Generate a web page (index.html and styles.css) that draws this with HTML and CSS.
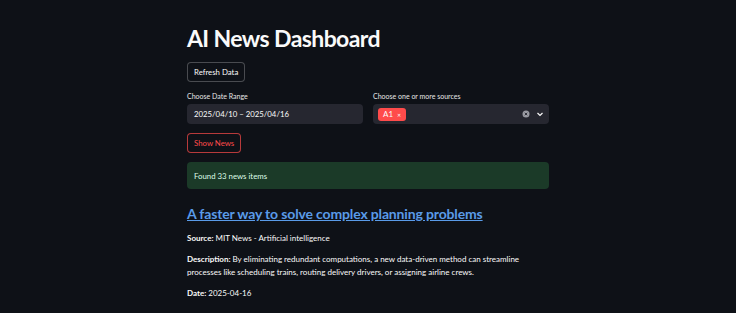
FILE: index.html
```html
<!DOCTYPE html>
<html lang="en">
<head>
  <meta charset="UTF-8" />
  <meta name="viewport" content="width=device-width, initial-scale=1.0"/>
  <title>AI News Dashboard</title>
  <link rel="stylesheet" href="styles.css">
</head>
<body>
  <main class="container">
    <h1 class="title">AI News Dashboard</h1>

    <button class="btn">Refresh Data</button>

    <div class="filters">
      <div class="field">
        <label class="field-label">Choose Date Range</label>
        <div class="input">2025/04/10 – 2025/04/16</div>
      </div>
      <div class="field">
        <label class="field-label">Choose one or more sources</label>
        <div class="input select">
          <span class="tag">A1 <span class="tag-x">&#x2715;</span></span>
          <span class="select-icons">
            <svg width="8" height="8" viewBox="0 0 16 16">
              <circle cx="8" cy="8" r="7" fill="#9a9ba3"/>
              <path d="M5.5 5.5l5 5M10.5 5.5l-5 5" stroke="#262730" stroke-width="1.8"/>
            </svg>
            <svg width="8" height="8" viewBox="0 0 16 16">
              <path d="M3 6l5 5 5-5" stroke="#fafafa" stroke-width="2.4" fill="none"/>
            </svg>
          </span>
        </div>
      </div>
    </div>

    <button class="btn btn-primary">Show News</button>

    <div class="alert">Found 33 news items</div>

    <article class="news">
      <h2><a href="#">A faster way to solve complex planning problems</a></h2>
      <p><strong>Source:</strong> MIT News - Artificial intelligence</p>
      <p><strong>Description:</strong> By eliminating redundant computations, a new data-driven method can streamline processes like scheduling trains, routing delivery drivers, or assigning airline crews.</p>
      <p><strong>Date:</strong> 2025-04-16</p>
    </article>
  </main>
</body>
</html>
```

FILE: styles.css
```css
:root {
  --bg: #0e1117;
  --input-bg: #262730;
  --text: #fafafa;
  --red: #ff4b4b;
  --link: #5a9be8;
}

* {
  box-sizing: border-box;
}

body {
  margin: 0;
  background: var(--bg);
  color: var(--text);
  font-family: Lato, "Noto Sans", sans-serif;
  font-size: 7.8px;
}

.container {
  width: 362px;
  margin: 0 auto;
  padding-top: 22px;
}

.title {
  font-size: 23px;
  font-weight: 700;
  margin: 0 0 8px;
  line-height: 32px;
  letter-spacing: -0.6px;
}

.btn {
  display: block;
  background: var(--bg);
  color: var(--text);
  border: 1px solid rgba(250, 250, 250, 0.25);
  border-radius: 4px;
  font-family: inherit;
  font-size: 7.8px;
  height: 20px;
  padding: 0 6px;
}

.btn-primary {
  color: var(--red);
  border-color: rgba(255, 75, 75, 0.7);
  margin-top: 9px;
}

.filters {
  display: grid;
  grid-template-columns: 1fr 1fr;
  gap: 10px;
  margin-top: 10px;
}

.field-label {
  display: block;
  font-size: 7px;
  margin-bottom: 4px;
  color: #e6e6e6;
}

.input {
  background: var(--input-bg);
  height: 20px;
  border-radius: 4px;
  padding: 0 7px;
  display: flex;
  align-items: center;
  font-size: 7.8px;
}

.select {
  padding: 0 5px;
  justify-content: space-between;
}

.tag {
  background: var(--red);
  border-radius: 3px;
  padding: 2px 5px;
  font-size: 8px;
  line-height: 8px;
}

.tag-x {
  font-size: 5px;
  margin-left: 2px;
}

.select-icons {
  display: flex;
  gap: 6px;
  align-items: center;
}

.select-icons svg {
  display: block;
}

.alert {
  margin-top: 9px;
  background: #1b3a28;
  color: #dffde9;
  border-radius: 4px;
  height: 27px;
  padding: 0 7px;
  display: flex;
  align-items: center;
}

.news h2 {
  font-size: 14px;
  font-weight: 700;
  margin: 15px 0 8px;
  line-height: 20px;
  letter-spacing: -0.15px;
}

.news a {
  color: var(--link);
}

.news p {
  margin: 0 0 8px;
  line-height: 13px;
  font-size: 8px;
  max-width: 345px;
}
```
